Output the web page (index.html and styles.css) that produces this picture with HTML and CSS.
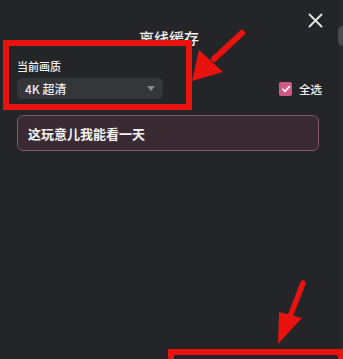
FILE: index.html
```html
<!DOCTYPE html>
<html lang="zh">
<head>
<meta charset="utf-8">
<link rel="stylesheet" href="styles.css">
</head>
<body>
<div class="page">
  <div class="panel">
    <header class="header">
      <div></div>
      <h1 class="title">离线缓存</h1>
      <button class="close" aria-label="关闭">
        <svg width="15" height="15" viewBox="0 0 15 15"><path d="M1.5 1.5 L13.5 13.5 M13.5 1.5 L1.5 13.5" stroke="#e6e6e6" stroke-width="1.8" stroke-linecap="round"/></svg>
      </button>
    </header>
    <div class="options">
      <div class="quality">
        <div class="label">当前画质</div>
        <div class="select">
          <span>4K 超清</span>
          <span class="caret"></span>
        </div>
      </div>
      <label class="check">
        <span class="box">
          <svg width="10" height="10" viewBox="0 0 10 10"><path d="M1.8 5.2 L4 7.4 L8.3 2.6" fill="none" stroke="#fff" stroke-width="1.6" stroke-linecap="round" stroke-linejoin="round"/></svg>
        </span>
        <span>全选</span>
      </label>
    </div>
    <div class="item">这玩意儿我能看一天</div>
  </div>
  <div class="side"><span class="side-knob"></span></div>
</div>

<div class="mark mark-top"></div>
<div class="mark mark-bottom"></div>
<svg class="arrows" width="343" height="359" viewBox="0 0 343 359">
  <path d="M242 33 L214 59" stroke="#e8130f" stroke-width="6" stroke-linecap="round"/>
  <polygon points="192,81 199,50 223,72" fill="#e8130f"/>
  <path d="M303 283 L291 314" stroke="#e8130f" stroke-width="5.5" stroke-linecap="round"/>
  <polygon points="278,344 279,312 302,318" fill="#e8130f"/>
</svg>
</body>
</html>
```

FILE: styles.css
```css
html, body {
  margin: 0;
  padding: 0;
}
body {
  width: 343px;
  height: 359px;
  overflow: hidden;
  background: #242528;
  font-family: "Noto Sans CJK SC", "Noto Sans", sans-serif;
  color: #f2f2f2;
  position: relative;
}
.page {
  display: flex;
  height: 100%;
}
.panel {
  flex: 1;
  padding: 0 19px 0 17px;
}
.side {
  width: 5px;
  background: #26272a;
  position: relative;
}
.side-knob {
  display: block;
  margin-top: 26px;
  width: 5px;
  height: 20px;
  border-radius: 5px 0 0 5px;
  background: #4a4b4e;
}
.header {
  display: grid;
  grid-template-columns: 1fr auto 1fr;
  margin-left: -17px;
  margin-right: -19px;
}
.title {
  margin: 29px 0 0;
  font-size: 15px;
  font-weight: 500;
  line-height: 18px;
  color: #f0f0f0;
}
.close {
  justify-self: end;
  margin: 13px 15px 0 0;
  padding: 0;
  border: 0;
  background: none;
  width: 15px;
  height: 15px;
  display: block;
}
.close svg { display: block; }
.options {
  display: flex;
  justify-content: space-between;
  align-items: flex-end;
  margin-top: 12px;
}
.label {
  font-size: 11px;
  line-height: 14px;
  font-weight: 500;
  color: #f0f0f0;
}
.select {
  margin-top: 5px;
  width: 146px;
  height: 21px;
  box-sizing: border-box;
  padding: 0 8px;
  border-radius: 5px;
  background: #35363a;
  display: flex;
  align-items: center;
  justify-content: space-between;
  font-size: 12px;
  font-weight: 500;
  color: #ededed;
}
.caret {
  width: 0;
  height: 0;
  border-left: 4px solid transparent;
  border-right: 4px solid transparent;
  border-top: 5px solid #8a8a8c;
}
.check {
  display: flex;
  align-items: center;
  gap: 7px;
  margin-right: -3px;
  height: 21px;
  font-size: 11.5px;
  font-weight: 500;
  color: #f0f0f0;
}
.box {
  width: 13px;
  height: 14px;
  border-radius: 2px;
  background: #cf5a83;
  display: flex;
  align-items: center;
  justify-content: center;
}
.box svg { display: block; }
.item {
  margin-top: 16px;
  height: 36px;
  box-sizing: border-box;
  border: 1px solid #86566b;
  border-radius: 6px;
  background: #3a2b33;
  padding: 0 10px;
  display: flex;
  align-items: center;
  font-size: 13px;
  font-weight: 700;
  color: #f4f4f4;
}
.mark {
  position: absolute;
  box-sizing: border-box;
  border: 6px solid #e8130f;
}
.mark-top {
  left: 3px;
  top: 40px;
  width: 189px;
  height: 70px;
}
.mark-bottom {
  left: 168px;
  top: 349px;
  width: 175px;
  height: 10px;
  border-bottom: 0;
  border-right-width: 5px;
}
.arrows {
  position: absolute;
  left: 0;
  top: 0;
  pointer-events: none;
}
```
